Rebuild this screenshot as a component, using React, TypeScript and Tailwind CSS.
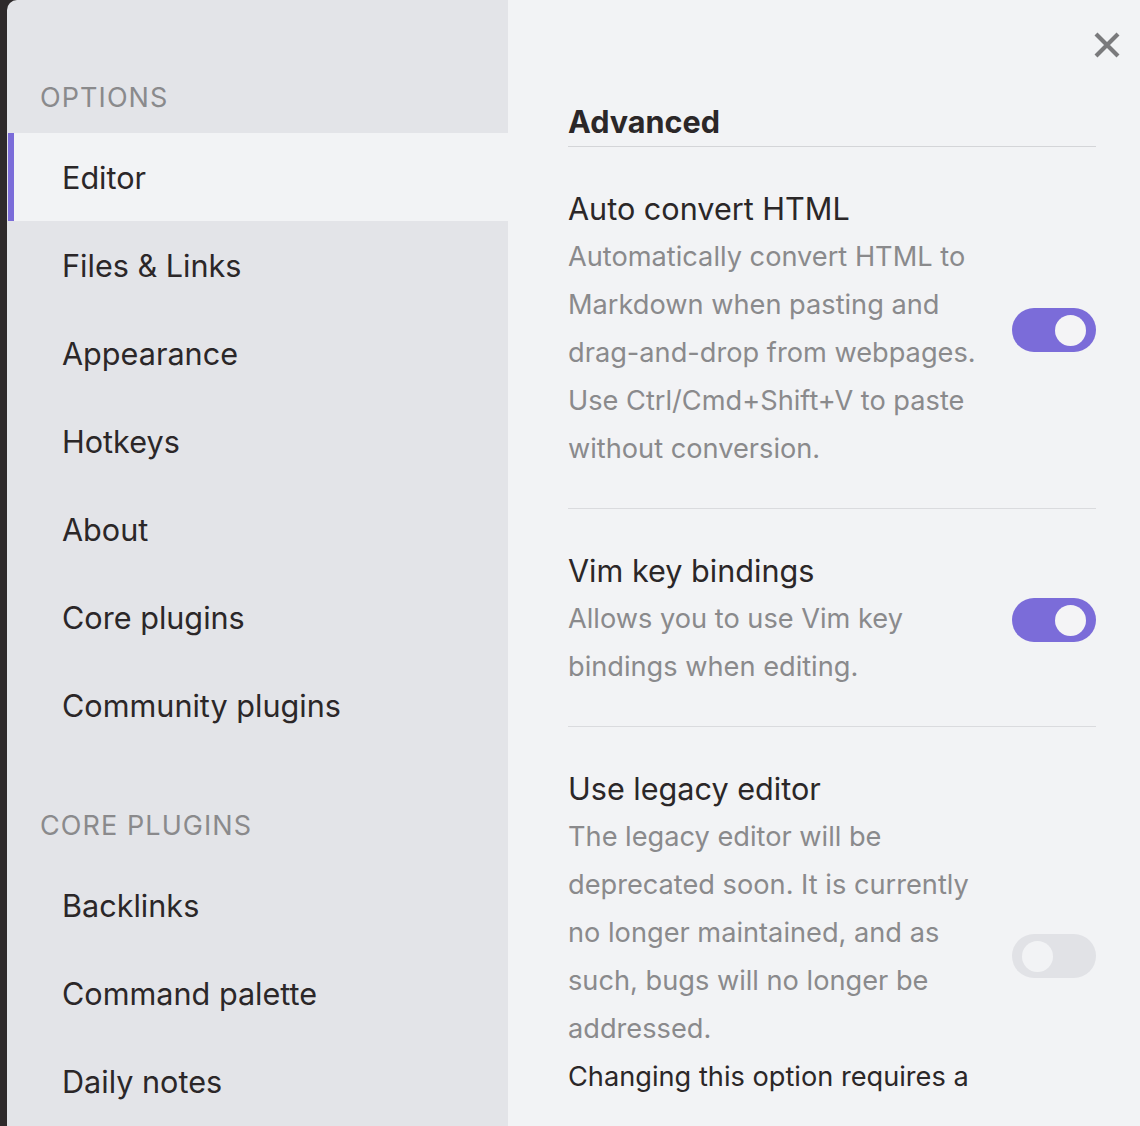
import React from "react";

const font = { fontFamily: "Inter, 'Noto Sans', sans-serif" };

function Toggle({ on, offset }: { on: boolean; offset?: boolean }) {
  return (
    <div
      className={
        "shrink-0 w-[84px] h-[44px] rounded-full flex items-center px-[10px] " +
        (on ? "bg-[#7b6cd9] justify-end" : "bg-[#e1e2e6] justify-start") +
        (offset ? " mt-[44px]" : "")
      }
    >
      <div className={"w-[31px] h-[31px] rounded-full " + (on ? "bg-[#f4f4f6]" : "bg-[#f2f3f5]")} />
    </div>
  );
}

function NavItem({ label, active }: { label: string; active?: boolean }) {
  return (
    <div
      className={
        "h-[88px] flex items-center pt-[2px] text-[30.6px] text-[#2b2728] " +
        (active ? "bg-[#f2f3f5] border-l-[6px] border-[#7b6cd9] pl-[48px] ml-[1px]" : "pl-[55px]")
      }
    >
      {label}
    </div>
  );
}

function Setting({
  title,
  desc,
  extra,
  on,
  last,
}: {
  title: string;
  desc: string;
  extra?: string;
  on: boolean;
  last?: boolean;
}) {
  return (
    <div className={"flex items-center pt-[40px] pb-[35px] " + (last ? "" : "border-b border-[#dadbde]")}>
      <div className="w-[420px] mr-auto">
        <div className="text-[30.6px] leading-[44px] text-[#2b2728]">{title}</div>
        <div className="mt-[2px] text-[27.2px] leading-[48px] text-[#8a8a8c]">{desc}</div>
        {extra && <div className="text-[27.2px] leading-[48px] text-[#2b2728]">{extra}</div>}
      </div>
      <Toggle on={on} offset={last} />
    </div>
  );
}

export default function App() {
  return (
    <div className="w-[1140px] h-[1126px] overflow-hidden flex bg-[#2e2a2b]" style={font}>
      <div className="w-[7px] shrink-0" />
      <div className="w-[501px] shrink-0 bg-[#e3e4e8] rounded-tl-[10px]">
        <div className="pt-[81px] mb-[18px] pl-[33px] text-[27px] leading-[34px] tracking-[0.04em] text-[#8a8a8c]">
          OPTIONS
        </div>
        <NavItem label="Editor" active />
        <NavItem label="Files & Links" />
        <NavItem label="Appearance" />
        <NavItem label="Hotkeys" />
        <NavItem label="About" />
        <NavItem label="Core plugins" />
        <NavItem label="Community plugins" />
        <div className="mt-[60px] mb-[18px] pl-[33px] text-[27px] leading-[34px] tracking-[0.04em] text-[#8a8a8c]">
          CORE PLUGINS
        </div>
        <NavItem label="Backlinks" />
        <NavItem label="Command palette" />
        <NavItem label="Daily notes" />
      </div>
      <div className="flex-1 bg-[#f2f3f5] relative pl-[60px] pr-[44px]">
        <div className="absolute right-[19px] top-[31px] text-[#7a7a7c]">
          <svg width="28" height="28" viewBox="0 0 28 28" fill="none" stroke="currentColor" strokeWidth="4.2" strokeLinecap="butt">
            <path d="M3 3 L25 25 M25 3 L3 25" />
          </svg>
        </div>
        <div className="pt-[104px] pb-[6px] border-b border-[#d4d5d8] text-[30.6px] leading-[36px] font-bold text-[#2b2728]">
          Advanced
        </div>
        <Setting
          title="Auto convert HTML"
          desc="Automatically convert HTML to Markdown when pasting and drag-and-drop from webpages. Use Ctrl/Cmd+Shift+V to paste without conversion."
          on
        />
        <Setting title="Vim key bindings" desc="Allows you to use Vim key bindings when editing." on />
        <Setting
          title="Use legacy editor"
          desc="The legacy editor will be deprecated soon. It is currently no longer maintained, and as such, bugs will no longer be addressed."
          extra="Changing this option requires a"
          on={false}
          last
        />
      </div>
    </div>
  );
}
